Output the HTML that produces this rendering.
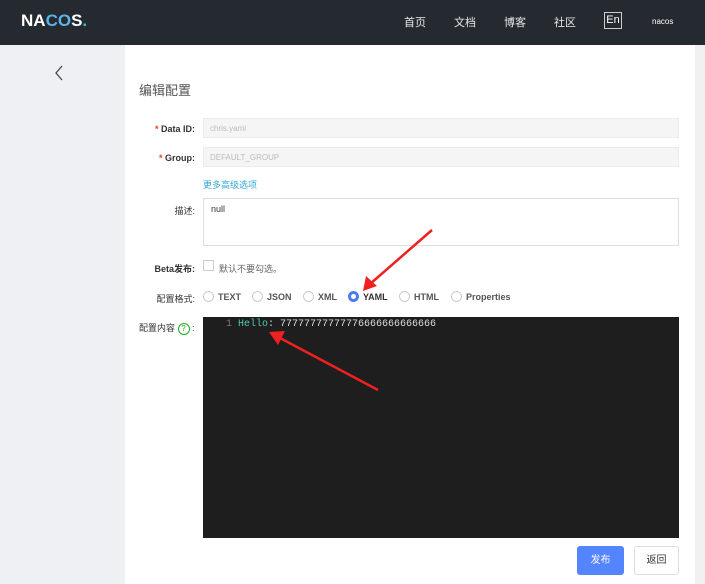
<!DOCTYPE html>
<html><head><meta charset="utf-8"><style>
body{margin:0;width:705px;height:584px;position:relative;overflow:hidden;font-family:"Liberation Sans","Noto Sans CJK SC",sans-serif;background:#fff}
.a{position:absolute}
.hd{left:0;top:0;width:705px;height:45px;background:#252a31}
.nav{color:#e8e8e8;font-size:11px;top:14px}
.side{left:0;top:45px;width:125px;height:539px;background:#eef0f3}
.sb{left:695px;top:45px;width:10px;height:539px;background:#f1f1f1}
.lbl{font-size:9px;color:#333;font-weight:bold;text-align:right;width:60px;left:135px}
.star{color:#f33}
.inp{left:203px;width:476px;height:20px;background:#f5f5f6;border:1px solid #ececec;box-sizing:border-box;font-size:8px;color:#bbb;padding:5px 6px}
.rad{font-size:9px;color:#555;font-weight:bold;top:291px;display:flex;align-items:center}
.rad i{display:inline-block;width:11px;height:11px;border:1px solid #ccc;border-radius:50%;margin-right:4px;box-sizing:border-box}
</style></head><body>
<div class="a hd"></div>
<div class="a" style="left:21px;top:11px;color:#fff;font-size:17px;font-weight:bold;letter-spacing:0">NA<span style="color:#5ab4e8">CO</span>S<span style="color:#2cc">.</span></div>
<div class="a nav" style="left:404px">首页</div>
<div class="a nav" style="left:454px">文档</div>
<div class="a nav" style="left:504px">博客</div>
<div class="a nav" style="left:554px">社区</div>
<div class="a" style="left:604px;top:12px;width:18px;height:17px;border:1px solid #ccc;box-sizing:border-box;color:#fff;font-size:11px;text-align:center;line-height:15px">En</div>
<div class="a" style="left:652px;top:17px;color:#fff;font-size:8px">nacos</div>
<div class="a side"></div>
<div class="a sb"></div>
<svg class="a" style="left:52px;top:65px" width="14" height="16"><path d="M10 1L4 8L10 15" stroke="#445" stroke-width="1.3" fill="none"/></svg>
<div class="a" style="left:139px;top:80px;font-size:13px;color:#555">编辑配置</div>
<div class="a lbl" style="top:124px"><span class="star">* </span>Data ID:</div>
<div class="a inp" style="top:118px">chris.yaml</div>
<div class="a lbl" style="top:153px"><span class="star">* </span>Group:</div>
<div class="a inp" style="top:147px">DEFAULT_GROUP</div>
<div class="a" style="left:203px;top:178px;font-size:9px;color:#33a6d8">更多高级选项</div>
<div class="a lbl" style="top:204px;font-weight:normal">描述:</div>
<div class="a" style="left:203px;top:198px;width:476px;height:48px;border:1px solid #ddd;box-sizing:border-box;font-size:9px;color:#333;padding:5px 7px">null</div>
<div class="a lbl" style="top:262px">Beta发布:</div>
<div class="a" style="left:203px;top:260px;width:11px;height:11px;border:1px solid #ccc;box-sizing:border-box"></div>
<div class="a" style="left:219px;top:262px;font-size:9px;color:#666">默认不要勾选。</div>
<div class="a lbl" style="top:292px;font-weight:normal">配置格式:</div>
<div class="a rad" style="left:203px"><i></i>TEXT</div>
<div class="a rad" style="left:252px"><i></i>JSON</div>
<div class="a rad" style="left:303px"><i></i>XML</div>
<div class="a rad" style="left:348px;color:#333"><i style="border:3px solid #4c7cf3"></i>YAML</div>
<div class="a rad" style="left:399px"><i></i>HTML</div>
<div class="a rad" style="left:451px"><i></i>Properties</div>
<div class="a" style="left:139px;top:321px;font-size:9px;color:#333">配置内容 <span style="display:inline-block;width:10px;height:10px;border:1px solid #2a2;border-radius:50%;color:#2a2;font-size:8px;line-height:10px;text-align:center">?</span> :</div>
<div class="a" style="left:203px;top:317px;width:476px;height:221px;background:#1e1e1e"></div>
<div class="a" style="left:226px;top:319px;font-family:'Liberation Mono',monospace;font-size:10px;color:#ddd;white-space:pre"><span style="color:#777">1 </span><span style="color:#4ec9b0">Hello</span>: 77777777777776666666666666</div>
<div class="a" style="left:577px;top:546px;width:47px;height:29px;background:#5584ff;border-radius:3px;color:#fff;font-size:10px;text-align:center;line-height:29px">发布</div>
<div class="a" style="left:634px;top:546px;width:45px;height:29px;border:1px solid #ddd;box-sizing:border-box;border-radius:3px;color:#333;font-size:10px;text-align:center;line-height:27px">返回</div>
<svg class="a" style="left:0;top:0" width="705" height="584">
<line x1="432" y1="230" x2="370" y2="284" stroke="#f02020" stroke-width="2.5"/>
<polygon points="363,291 366,276 377,286" fill="#f02020"/>
<line x1="378" y1="390" x2="280" y2="338" stroke="#f02020" stroke-width="2.5"/>
<polygon points="269,332 285,331 278,345" fill="#f02020"/>
</svg>
</body></html>
